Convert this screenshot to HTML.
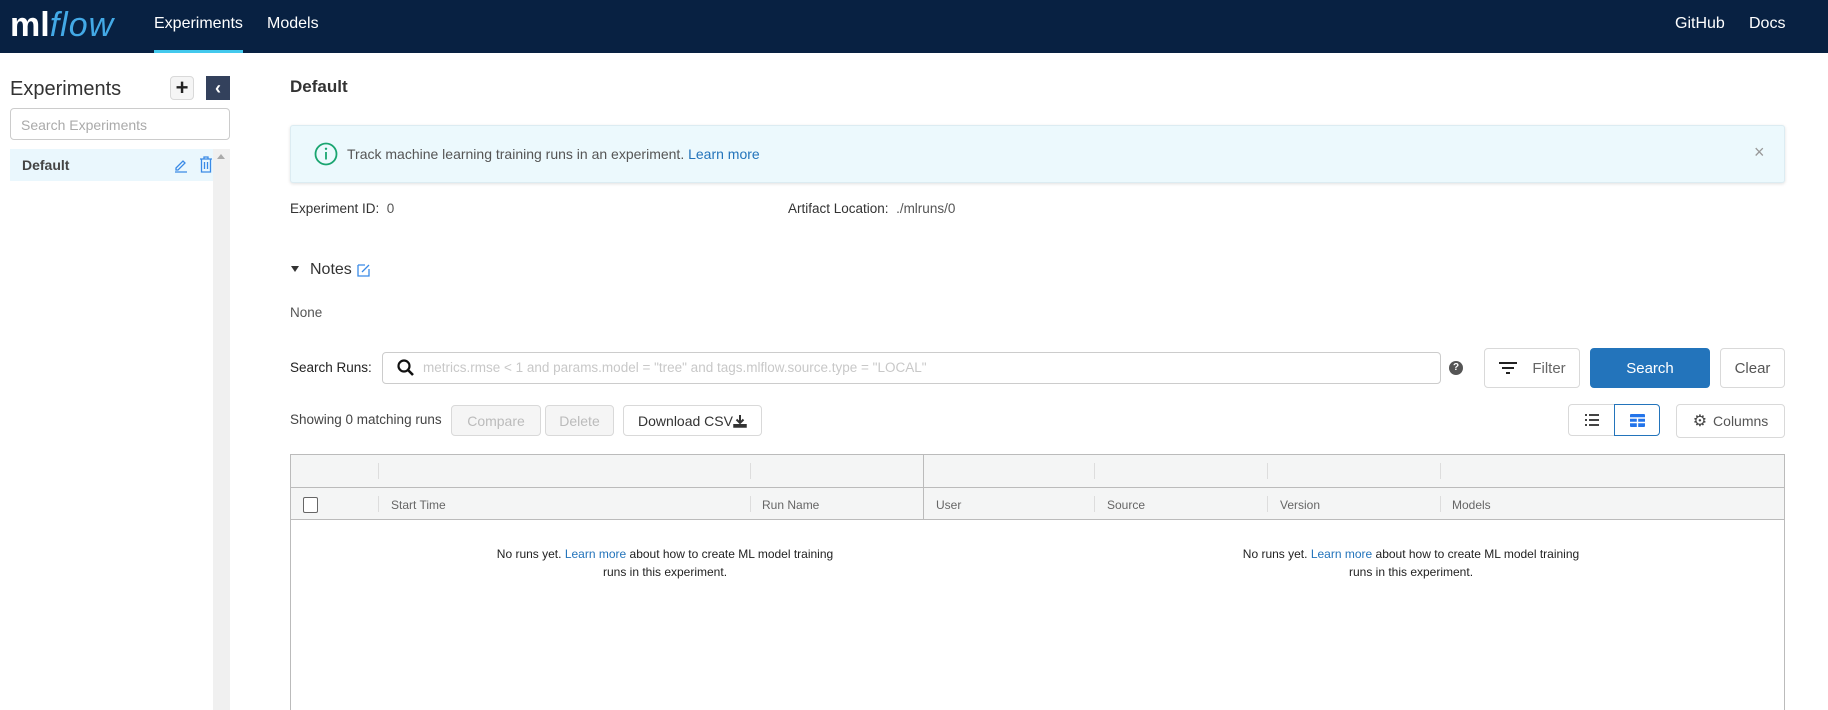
<!DOCTYPE html>
<html><head><meta charset="utf-8"><style>
*{box-sizing:border-box;margin:0;padding:0}
body{width:1828px;height:710px;overflow:hidden;background:#fff;font-family:"Liberation Sans",sans-serif;color:#333;position:relative}
.a{position:absolute}
.hdr{left:0;top:0;width:1828px;height:53px;background:#082142}
.nav{color:#fff;font-size:16px;top:15px}
.btn{position:absolute;border:1px solid #d9d9d9;border-radius:4px;background:#fff;font-size:14px;color:#555;display:flex;align-items:center;justify-content:center}
.dis{background:#f5f5f5;color:#bbb}
.th{position:absolute;font-size:12px;color:#666;top:498px}
.vl{position:absolute;width:1px;background:#ddd;height:16px}
.empty{position:absolute;top:545px;width:350px;text-align:center;font-size:12px;line-height:18px;color:#222}
.lk{color:#2374bb}
</style></head><body>
<div class="a hdr"></div>
<div class="a" style="left:10px;top:6px;font-size:34px;font-weight:bold;color:#fff;letter-spacing:0px">ml<span style="color:#43a9e6;font-style:italic;font-weight:normal;letter-spacing:1px">flow</span></div>
<div class="a nav" style="left:154px">Experiments</div>
<div class="a" style="left:154px;top:50px;width:89px;height:3px;background:#43c9ed"></div>
<div class="a nav" style="left:267px">Models</div>
<div class="a nav" style="left:1675px">GitHub</div>
<div class="a nav" style="left:1749px">Docs</div>

<div class="a" style="left:10px;top:78px;font-size:20px;color:#333">Experiments</div>
<div class="btn" style="left:170px;top:76px;width:24px;height:24px;background:#f5f5f5;color:#222;font-size:22px;font-weight:bold">+</div>
<div class="a" style="left:206px;top:76px;width:24px;height:24px;background:#33415c;color:#fff;font-size:18px;font-weight:bold;text-align:center;line-height:24px">&#8249;</div>
<div class="a" style="left:10px;top:108px;width:220px;height:32px;border:1px solid #ccc;border-radius:4px;font-size:14px;color:#aaa;padding:8px 10px">Search Experiments</div>
<div class="a" style="left:10px;top:149px;width:203px;height:32px;background:#eaf7fd"></div>
<div class="a" style="left:22px;top:157px;font-size:14px;font-weight:bold;color:#444">Default</div>
<svg class="a" style="left:174px;top:157px" width="14" height="16" viewBox="0 0 14 16"><path d="M2 11 L9 4 L11 6 L4 13 L2 13Z M1 15 H13" stroke="#3a8ae6" fill="none" stroke-width="1.3"/></svg>
<svg class="a" style="left:199px;top:156px" width="14" height="17" viewBox="0 0 14 17"><path d="M1 3 H13 M5 3 V1 H9 V3 M2.5 3 V16 H11.5 V3 M5.5 6 V13 M8.5 6 V13" stroke="#3a8ae6" fill="none" stroke-width="1.3"/></svg>
<div class="a" style="left:213px;top:149px;width:17px;height:561px;background:#f0f0f0"></div>
<div class="a" style="left:217px;top:154px;width:0;height:0;border-left:4px solid transparent;border-right:4px solid transparent;border-bottom:5px solid #aaa"></div>

<div class="a" style="left:290px;top:77px;font-size:17px;font-weight:bold;color:#333">Default</div>
<div class="a" style="left:290px;top:125px;width:1495px;height:58px;background:#ecf9fd;border:1px solid #dcecf2;border-radius:3px;box-shadow:0 1px 3px rgba(0,0,0,.12)"></div>
<svg class="a" style="left:314px;top:142px" width="24" height="24" viewBox="0 0 24 24"><circle cx="12" cy="12" r="10.5" fill="none" stroke="#1aa570" stroke-width="1.8"/><path d="M12 10 V17.5" stroke="#1aa570" stroke-width="1.8"/><circle cx="12" cy="6.8" r="1.2" fill="#1aa570"/></svg>
<div class="a" style="left:347px;top:146px;font-size:14px;color:#555">Track machine learning training runs in an experiment. <span class="lk">Learn more</span></div>
<div class="a" style="left:1754px;top:142px;font-size:18px;color:#999">×</div>

<div class="a" style="left:290px;top:201px;font-size:13.5px;color:#333">Experiment ID:&nbsp; <span style="color:#555">0</span></div>
<div class="a" style="left:788px;top:201px;font-size:13.5px;color:#333">Artifact Location:&nbsp; <span style="color:#555">./mlruns/0</span></div>
<div class="a" style="left:291px;top:266px;width:0;height:0;border-left:4px solid transparent;border-right:4px solid transparent;border-top:6px solid #333"></div>
<div class="a" style="left:310px;top:261px;font-size:16px;color:#333">Notes</div>
<svg class="a" style="left:357px;top:263px" width="14" height="14" viewBox="0 0 14 14"><path d="M1 2 H8 M1 2 V13 H12 V6 M5 9 L12 2" stroke="#3a8ae6" fill="none" stroke-width="1.3"/></svg>
<div class="a" style="left:290px;top:305px;font-size:13.5px;color:#555">None</div>

<div class="a" style="left:290px;top:360px;font-size:13.5px;color:#222">Search Runs:</div>
<div class="a" style="left:382px;top:352px;width:1059px;height:32px;border:1px solid #ccc;border-radius:4px"></div>
<svg class="a" style="left:396px;top:358px" width="20" height="20" viewBox="0 0 20 20"><circle cx="8" cy="8" r="5.5" fill="none" stroke="#111" stroke-width="2.2"/><path d="M12 12 L17 17" stroke="#111" stroke-width="2.6"/></svg>
<div class="a" style="left:423px;top:360px;font-size:13.5px;color:#c8c8c8">metrics.rmse &lt; 1 and params.model = "tree" and tags.mlflow.source.type = "LOCAL"</div>
<div class="a" style="left:1449px;top:361px;width:14px;height:14px;border-radius:50%;background:#555;color:#fff;font-size:10px;font-weight:bold;text-align:center;line-height:14px">?</div>
<div class="btn" style="left:1484px;top:348px;width:96px;height:40px;font-size:15px;color:#666"><svg width="20" height="14" style="margin-right:14px"><path d="M1 2 H19 M4 7 H16 M8 12 H12" stroke="#222" stroke-width="2"/></svg>Filter</div>
<div class="btn" style="left:1590px;top:348px;width:120px;height:40px;background:#2374bb;border-color:#2374bb;color:#fff;font-size:15px">Search</div>
<div class="btn" style="left:1720px;top:348px;width:65px;height:40px;font-size:15px">Clear</div>

<div class="a" style="left:290px;top:412px;font-size:13.5px;color:#444">Showing 0 matching runs</div>
<div class="btn dis" style="left:451px;top:405px;width:90px;height:31px">Compare</div>
<div class="btn dis" style="left:545px;top:405px;width:69px;height:31px">Delete</div>
<div class="btn" style="left:623px;top:405px;width:139px;height:31px;color:#333">Download CSV<svg width="14" height="14" viewBox="0 0 14 14"><path d="M7 1 V9 M3.5 5.5 L7 9 L10.5 5.5" stroke="#333" stroke-width="2" fill="none"/><path d="M1 10 V13 H13 V10" fill="#333" stroke="#333" stroke-width="1.5"/></svg></div>
<div class="btn" style="left:1568px;top:404px;width:47px;height:32px;border-radius:4px 0 0 4px"><svg width="16" height="14"><path d="M1 2 H3 M5 2 H15 M1 7 H3 M5 7 H15 M1 12 H3 M5 12 H15" stroke="#444" stroke-width="2"/></svg></div>
<div class="btn" style="left:1614px;top:404px;width:46px;height:32px;border-color:#2374bb;border-radius:0 4px 4px 0"><svg width="15" height="13"><rect x="0" y="0" width="15" height="13" rx="1" fill="#2374ea"/><path d="M0 4 H15 M7.5 4 V13 M0 8.5 H15" stroke="#fff" stroke-width="1.4"/></svg></div>
<div class="btn" style="left:1676px;top:404px;width:109px;height:34px;font-size:14px"><span style="font-size:16px;margin-right:6px;color:#444">⚙</span>Columns</div>

<div class="a" style="left:290px;top:454px;width:1495px;height:256px;border:1px solid #bbb;border-bottom:none"></div>
<div class="a" style="left:291px;top:455px;width:1493px;height:65px;background:#f4f5f5;border-bottom:1px solid #bbb"></div>
<div class="a" style="left:291px;top:487px;width:1493px;height:1px;background:#bbb"></div>
<div class="a" style="left:923px;top:455px;width:1px;height:65px;background:#bbb"></div>
<div class="vl" style="left:378px;top:463px"></div><div class="vl" style="left:378px;top:496px"></div>
<div class="vl" style="left:750px;top:463px"></div><div class="vl" style="left:750px;top:496px"></div>
<div class="vl" style="left:1094px;top:463px"></div><div class="vl" style="left:1094px;top:496px"></div>
<div class="vl" style="left:1267px;top:463px"></div><div class="vl" style="left:1267px;top:496px"></div>
<div class="vl" style="left:1440px;top:463px"></div><div class="vl" style="left:1440px;top:496px"></div>
<div class="a" style="left:303px;top:497px;width:15px;height:16px;border:1px solid #666;border-radius:2px;background:#fff"></div>
<div class="th" style="left:391px">Start Time</div>
<div class="th" style="left:762px">Run Name</div>
<div class="th" style="left:936px">User</div>
<div class="th" style="left:1107px">Source</div>
<div class="th" style="left:1280px">Version</div>
<div class="th" style="left:1452px">Models</div>
<div class="empty" style="left:490px">No runs yet. <span class="lk">Learn more</span> about how to create ML model training runs in this experiment.</div>
<div class="empty" style="left:1236px">No runs yet. <span class="lk">Learn more</span> about how to create ML model training runs in this experiment.</div>
</body></html>
